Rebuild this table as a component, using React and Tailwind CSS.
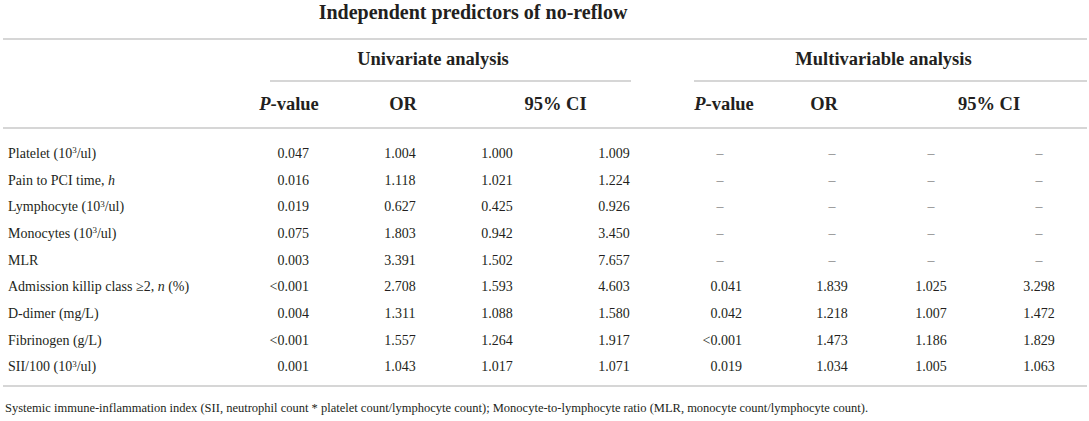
const rows = [
  { label: <>Platelet (10<sup className="text-[9px]">3</sup>/ul)</>, u: ["0.047", "1.004", "1.000", "1.009"], m: ["–", "–", "–", "–"] },
  { label: <>Pain to PCI time, <i>h</i></>, u: ["0.016", "1.118", "1.021", "1.224"], m: ["–", "–", "–", "–"] },
  { label: <>Lymphocyte (10<sup className="text-[9px]">3</sup>/ul)</>, u: ["0.019", "0.627", "0.425", "0.926"], m: ["–", "–", "–", "–"] },
  { label: <>Monocytes (10<sup className="text-[9px]">3</sup>/ul)</>, u: ["0.075", "1.803", "0.942", "3.450"], m: ["–", "–", "–", "–"] },
  { label: "MLR", u: ["0.003", "3.391", "1.502", "7.657"], m: ["–", "–", "–", "–"] },
  { label: <>Admission killip class ≥2, <i>n</i> (%)</>, u: ["<0.001", "2.708", "1.593", "4.603"], m: ["0.041", "1.839", "1.025", "3.298"] },
  { label: "D-dimer (mg/L)", u: ["0.004", "1.311", "1.088", "1.580"], m: ["0.042", "1.218", "1.007", "1.472"] },
  { label: "Fibrinogen (g/L)", u: ["<0.001", "1.557", "1.264", "1.917"], m: ["<0.001", "1.473", "1.186", "1.829"] },
  { label: <>SII/100 (10<sup className="text-[9px]">3</sup>/ul)</>, u: ["0.001", "1.043", "1.017", "1.071"], m: ["0.019", "1.034", "1.005", "1.063"] },
];

// label | P | sp | OR | sp | lo | sp | hi | gap | P | sp | OR | sp | lo | sp | hi | end
const cols =
  "grid grid-cols-[255px_58px_54px_60px_37px_60px_57px_60px_46px_60px_52px_60px_39px_60px_48px_60px_18px]";

function PVal({ v }) {
  if (v === "–") return <span className="text-[#888]">–</span>;
  return <span className="inline-block w-[44px] text-right">{v}</span>;
}

function Num({ v }) {
  if (v === "–") return <span className="text-[#888]">–</span>;
  return v;
}

export default function App() {
  return (
    <div className="w-[1089px] h-[421px] bg-white text-[#231f20] font-['Liberation_Serif',serif] pl-[3px] pr-[2px]">
      <div className="h-[38px] text-center font-bold text-[20px] leading-[24px] pr-[144px]">
        Independent predictors of no-reflow
      </div>
      <div className="h-[2px] bg-[#d6d6d6]" />

      {/* group headers */}
      <div className={`${cols} h-[42px] font-bold text-[18.5px]`}>
        <div className="col-start-2 col-span-7 flex flex-col pl-[12px] pr-[13px]">
          <div className="flex-1 flex items-center justify-center pr-[35px]">Univariate analysis</div>
          <div className="h-[2px] bg-[#d6d6d6]" />
        </div>
        <div className="col-start-10 col-span-8 flex flex-col pl-[4px]">
          <div className="flex-1 flex items-center justify-center pr-[14px]">Multivariable analysis</div>
          <div className="h-[2px] bg-[#d6d6d6]" />
        </div>
      </div>

      {/* column headers */}
      <div className={`${cols} h-[45px] items-center font-bold text-[18.5px]`}>
        <div className="col-start-2 col-span-2 text-center pr-[50px] whitespace-nowrap"><i>P</i>-value</div>
        <div className="col-start-4 text-center pl-[6px]">OR</div>
        <div className="col-start-6 col-span-3 text-center">95% CI</div>
        <div className="col-start-10 col-span-2 text-center pr-[44px] whitespace-nowrap"><i>P</i>-value</div>
        <div className="col-start-12 text-center pr-[16px]">OR</div>
        <div className="col-start-14 col-span-3 text-center pl-[8px]">95% CI</div>
      </div>
      <div className="h-[2px] bg-[#d6d6d6]" />

      <div className="pt-[11px] pb-[5px] text-[14px]">
        {rows.map((r, i) => (
          <div key={i} className={`${cols} h-[26.7px] items-center`}>
            <div className="pl-[5px] whitespace-nowrap">{r.label}</div>
            <div className="col-start-2 text-center"><PVal v={r.u[0]} /></div>
            <div className="col-start-4 text-center"><Num v={r.u[1]} /></div>
            <div className="col-start-6 text-center"><Num v={r.u[2]} /></div>
            <div className="col-start-8 text-center"><Num v={r.u[3]} /></div>
            <div className="col-start-10 text-center"><PVal v={r.m[0]} /></div>
            <div className="col-start-12 text-center"><Num v={r.m[1]} /></div>
            <div className="col-start-14 text-center"><Num v={r.m[2]} /></div>
            <div className="col-start-16 text-center"><Num v={r.m[3]} /></div>
          </div>
        ))}
      </div>
      <div className="h-[2px] bg-[#d6d6d6]" />

      <div className="pt-[13px] pl-[2px] text-[12.5px] leading-[16px] whitespace-nowrap">
        Systemic immune-inflammation index (SII, neutrophil count * platelet count/lymphocyte count); Monocyte-to-lymphocyte ratio (MLR, monocyte count/lymphocyte count).
      </div>
    </div>
  );
}
